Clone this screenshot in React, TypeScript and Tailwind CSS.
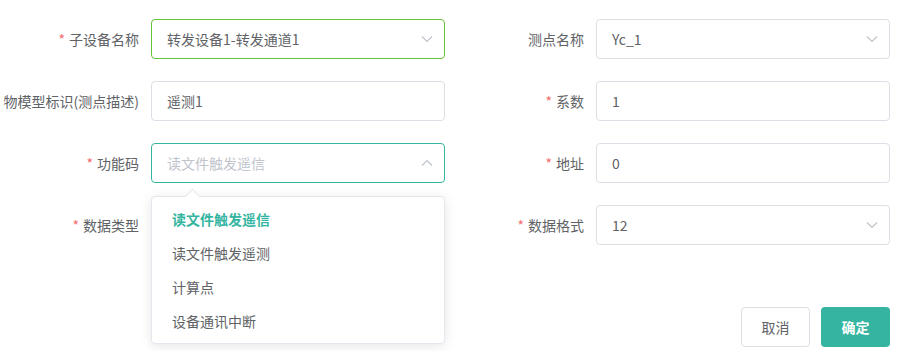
import React from "react";

const font = { fontFamily: '"Noto Sans CJK SC", "Noto Sans", sans-serif' };

function Chevron({ up = false }: { up?: boolean }) {
  return (
    <svg width="14" height="14" viewBox="0 0 14 14" className="text-[#c0c4cc]">
      {up ? (
        <path d="M2 9.5 L7 4.5 L12 9.5" fill="none" stroke="currentColor" strokeWidth="1.2" />
      ) : (
        <path d="M2 4.5 L7 9.5 L12 4.5" fill="none" stroke="currentColor" strokeWidth="1.2" />
      )}
    </svg>
  );
}

function Label({ text, required }: { text: string; required?: boolean }) {
  return (
    <div className="w-[139px] shrink-0 flex justify-end items-center whitespace-nowrap text-[14px] text-[#606266]">
      {required && <span className="text-[#f56c6c] mr-1">*</span>}
      <span>{text}</span>
    </div>
  );
}

function Field({
  value,
  placeholder,
  select,
  up,
  border = "border-[#dcdfe6]",
}: {
  value?: string;
  placeholder?: string;
  select?: boolean;
  up?: boolean;
  border?: string;
}) {
  return (
    <div
      className={`w-[294px] h-[40px] shrink-0 rounded-[4px] border ${border} bg-white flex items-center pl-[15px] pr-[10px] text-[14px]`}
    >
      <span className={`flex-1 ${value ? "text-[#606266]" : "text-[#c0c4cc]"}`}>{value || placeholder}</span>
      {select && <Chevron up={up} />}
    </div>
  );
}

export default function App() {
  return (
    <div className="w-[914px] h-[351px] bg-white relative overflow-hidden" style={font}>
      <div className="pt-[19px] flex flex-col gap-[22px]">
        <div className="flex">
          <div className="flex gap-[12px]">
            <Label text="子设备名称" required />
            <Field value="转发设备1-转发通道1" select border="border-[#67c23a]" />
          </div>
          <div className="flex gap-[12px]">
            <Label text="测点名称" />
            <Field value="Yc_1" select />
          </div>
        </div>
        <div className="flex">
          <div className="flex gap-[12px]">
            <Label text="物模型标识(测点描述)" />
            <Field value="遥测1" />
          </div>
          <div className="flex gap-[12px]">
            <Label text="系数" required />
            <Field value="1" />
          </div>
        </div>
        <div className="flex">
          <div className="flex gap-[12px]">
            <Label text="功能码" required />
            <Field placeholder="读文件触发遥信" select up border="border-[#35b5a1]" />
          </div>
          <div className="flex gap-[12px]">
            <Label text="地址" required />
            <Field value="0" />
          </div>
        </div>
        <div className="flex">
          <div className="flex gap-[12px]">
            <Label text="数据类型" required />
            <Field value="" select />
          </div>
          <div className="flex gap-[12px]">
            <Label text="数据格式" required />
            <Field value="12" select />
          </div>
        </div>
      </div>

      <div className="mt-[62px] flex justify-end gap-[11px] pr-[24px]">
        <button className="w-[69px] h-[40px] rounded-[4px] border border-[#dcdfe6] bg-white text-[14px] text-[#606266]">
          取消
        </button>
        <button className="w-[69px] h-[40px] rounded-[4px] bg-[#35b5a1] text-[14px] text-white font-semibold">
          确定
        </button>
      </div>

      {/* Dropdown */}
      <div className="absolute left-[151px] top-[196px] w-[294px] rounded-[4px] border border-[#e4e7ed] bg-white shadow-[0_2px_12px_0_rgba(0,0,0,0.1)] py-[5px]">
        <div className="absolute -top-[6px] left-[35px] w-[11px] h-[11px] rotate-45 bg-white border-l border-t border-[#e4e7ed]" />
        <div className="relative h-[34px] flex items-center pl-[20px] text-[14px] text-[#35b5a1] font-bold">读文件触发遥信</div>
        <div className="h-[34px] flex items-center pl-[20px] text-[14px] text-[#606266]">读文件触发遥测</div>
        <div className="h-[34px] flex items-center pl-[20px] text-[14px] text-[#606266]">计算点</div>
        <div className="h-[34px] flex items-center pl-[20px] text-[14px] text-[#606266]">设备通讯中断</div>
      </div>
    </div>
  );
}
